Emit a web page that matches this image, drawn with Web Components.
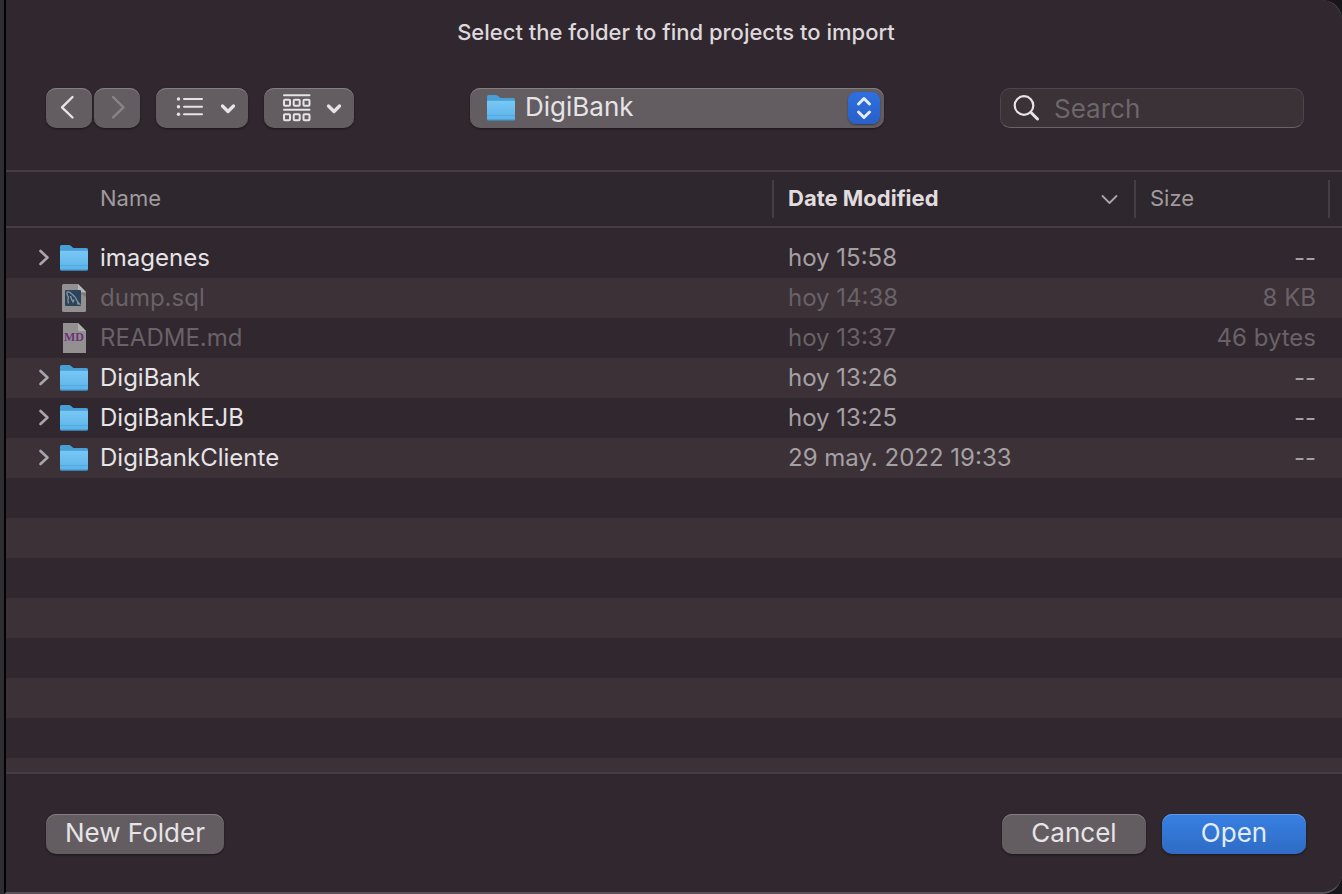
<!DOCTYPE html>
<html lang="en">
<head>
<meta charset="utf-8">
<title>Select the folder to find projects to import</title>
<style>
  html, body { margin: 0; height: 100%; }
  body { background: #2f2d31; font-family: Inter, "Liberation Sans", sans-serif; color: #e0dcdf; overflow: hidden; }
</style>
</head>
<body>
<open-panel>
  <span slot="title">Select the folder to find projects to import</span>
  <panel-toolbar slot="toolbar"></panel-toolbar>
  <file-list>
    <file-entry kind="folder" name="imagenes" date="hoy 15:58" size="--"></file-entry>
    <file-entry kind="sql" name="dump.sql" date="hoy 14:38" size="8 KB" disabled></file-entry>
    <file-entry kind="md" name="README.md" date="hoy 13:37" size="46 bytes" disabled></file-entry>
    <file-entry kind="folder" name="DigiBank" date="hoy 13:26" size="--"></file-entry>
    <file-entry kind="folder" name="DigiBankEJB" date="hoy 13:25" size="--"></file-entry>
    <file-entry kind="folder" name="DigiBankCliente" date="29 may. 2022 19:33" size="--"></file-entry>
  </file-list>
  <push-button slot="start">New Folder</push-button>
  <push-button slot="end">Cancel</push-button>
  <push-button slot="end" primary>Open</push-button>
</open-panel>

<script>
const base = (tag, html) => customElements.define(tag, class extends HTMLElement {
  constructor() {
    super();
    this.attachShadow({ mode: 'open' }).innerHTML = html;
  }
});

/* Dialog window: title, toolbar, contents, row of buttons */
base('open-panel', `
<style>
  :host { display: block; height: 100vh; box-sizing: border-box; padding-left: 4px; background: #2f2d31; }
  .under { height: 100%; background: #17161a; }
  section { height: 100%; box-sizing: border-box; display: flex; flex-direction: column; background: #31272e;
    border-left: 2px solid #000; border-bottom: 2px solid #575156; border-radius: 0 20px 20px 0;
    box-shadow: inset -1px 1px 0 -1px #575156; overflow: hidden; }
  h1 { margin: 0; padding: 16px 0 0 4px; font-size: 22px; line-height: 32px; font-weight: 500; text-align: center; color: #dcd8db; }
  .bar { padding: 40px 38px 42px 40px; }
  footer { display: flex; justify-content: space-between; padding: 40px 36px 38px 40px; }
  .end { display: flex; gap: 16px; }
</style>
<div class="under"><section role="dialog">
  <h1><slot name="title"></slot></h1>
  <div class="bar"><slot name="toolbar"></slot></div>
  <slot></slot>
  <footer><slot name="start"></slot><div class="end"><slot name="end"></slot></div></footer>
</section></div>`);

base('push-button', `
<style>
  :host { display: block; }
  button { display: block; height: 40px; min-width: 144px; padding: 0 19px 2px; border: 0; border-radius: 10px;
    background: #635d61; color: #e6e4e6; font: inherit; font-size: 26px; line-height: 38px;
    box-shadow: inset 0 1px 0 #837e82, 0 1px 2px #1d171b; }
  :host([primary]) button { background: linear-gradient(#3780e2, #2f6cc4); color: #e4ecf9; box-shadow: inset 0 1px 0 #5e9aea, 0 1px 2px #1d171b; }
</style>
<button type="button"><slot></slot></button>`);

/* Square toolbar button holding an icon */
base('tool-button', `
<style>
  :host { display: block; }
  button { display: flex; align-items: center; justify-content: center; width: var(--w, 46px); height: 40px; padding: 0; border: 0;
    border-radius: 10px; background: #635d61; color: #e6e4e6; box-shadow: inset 0 1px 0 #837e82, 0 1px 2px #1d171b; }
</style>
<button type="button"><slot></slot></button>`);

const icons = {
  folder: `<svg viewBox="0 0 30 30" width="30" height="30">
    <defs><linearGradient id="g" x1="0" y1="0" x2="0" y2="1"><stop offset="0" stop-color="#78c8f5"/><stop offset="1" stop-color="#5bb2e8"/></linearGradient></defs>
    <rect x="1.5" y="25" width="27" height="3" rx="1" fill="#1c161a" opacity=".5"/>
    <path d="M1 3.500Q1 2 2.500 2H10q1 0 1.800.700L13.800 4.400q.700.600 1.700.600H27.500Q29 5 29 6.500V15H1z" fill="#489fd6"/>
    <path d="M1 8.500Q1 7.500 2 7.500H28q1 0 1 1V26q0 1.500-1.500 1.500h-25Q1 27.500 1 26z" fill="url(#g)"/>
    <path d="M1 7.500H29M1 22.500H29" stroke="#4a9ed2" stroke-width=".800" opacity=".75"/>
    <path d="M1.500 27H28.500" stroke="#3c8fc6" stroke-width="1"/></svg>`,
  sql: `<svg viewBox="0 0 30 30" width="30" height="30">
    <path d="M3 2.500Q3 1 4.500 1H19l8 8V27.500q0 1.500-1.500 1.500h-21Q3 29 3 27.500z" fill="#929091"/>
    <path d="M19 1l8 8h-6.500Q19 9 19 7.500z" fill="#b8b6b7"/><path d="M20 10h7v4z" fill="#7d7b7c"/>
    <rect x="6" y="7" width="16" height="16" rx="1" fill="#2b4459"/>
    <path d="M9.500 20.500q-1.500-3.500 0-6.500-2.500-3-1-5 2-.500 4 1.700 4.500 3.300 5.500 7.300l2.500 3-2.500-.500M11.500 13q1 3.500 2.500 6l1-2.500" fill="none" stroke="#8695a2" stroke-width="1.300"/></svg>`,
  md: `<svg viewBox="0 0 30 30" width="30" height="30">
    <path d="M4 0H19l8 8V30H4z" fill="#929091"/><path d="M19 0l8 8h-6.500Q19 8 19 6.500z" fill="#b0aeaf"/>
    <text x="15" y="18" text-anchor="middle" font-family="Liberation Serif, serif" font-weight="700" font-size="12" fill="#6e3377">MD</text></svg>`
};

customElements.define('file-icon', class extends HTMLElement {
  constructor() { super(); this.attachShadow({ mode: 'open' }); }
  connectedCallback() {
    this.shadowRoot.innerHTML = `<style>:host { display: block; width: 30px; height: 30px; } svg { display: block; }</style>` + icons[this.getAttribute('kind')];
  }
});

/* Pop-up of the current path */
base('path-popup', `
<style>
  :host { display: grid; flex: 0 1 414px; height: 40px; }
  select, .over { grid-area: 1 / 1; }
  select { appearance: none; width: 100%; height: 40px; margin: 0; padding: 0 40px 4px 55px; border: 0; border-radius: 10px;
    background: #635d61; color: #e6e4e6; font: inherit; font-size: 26px; box-shadow: inset 0 1px 0 #837e82, 0 1px 2px #1d171b; }
  .over { display: flex; justify-content: space-between; align-items: center; padding: 0 4px 0 16px; pointer-events: none; z-index: 1; }
  .step { display: block; width: 32px; height: 32px; border-radius: 8px; background: linear-gradient(#2f6fe0, #2760c8); box-shadow: 0 1px 2px #3d383b; }
</style>
<select aria-label="Folder"><option>DigiBank</option></select>
<div class="over"><file-icon kind="folder"></file-icon>
  <svg class="step" viewBox="0 0 32 32" fill="none" stroke="#e4ecfb" stroke-width="3" stroke-linecap="round" stroke-linejoin="round"><path d="M10.500 12L16 6.500l5.500 5.500M10.500 20L16 25.500 21.500 20"/></svg>
</div>`);

base('search-field', `
<style>
  :host { display: flex; align-items: center; box-sizing: border-box; flex: 0 1 304px; min-width: 0; height: 40px; gap: 13px; padding: 0 12px;
    background: #3a3237; border: 1px solid #4d454a; border-bottom-color: #696266; border-radius: 10px; }
  svg { flex: none; display: block; }
  input { flex: 1; min-width: 0; height: 38px; margin: 0; padding: 0; border: 0; outline: 0; background: none; color: #e6e4e6; font: inherit; font-size: 26px; }
  input::placeholder { color: #6d666a; opacity: 1; }
</style>
<svg width="28" height="28" viewBox="0 0 28 28" fill="none" stroke="#e6e4e6" stroke-linecap="round"><circle cx="11" cy="11.500" r="9.300" stroke-width="2.200"/><path d="M18 18.500l6.500 6.500" stroke-width="3"/></svg>
<input type="text" placeholder="Search" aria-label="Search">`);

base('panel-toolbar', `
<style>
  :host { display: flex; justify-content: space-between; }
  .left, .nav { display: flex; }
  .left { gap: 16px; } .nav { gap: 2px; }
  svg { display: block; fill: none; stroke: currentColor; stroke-linecap: round; stroke-linejoin: round; }
  .view { --w: 92px; } .group { --w: 90px; }
  .dim { color: #8a8488; }
</style>
<div class="left">
  <div class="nav">
    <tool-button><svg width="46" height="40" viewBox="0 0 46 40" stroke-width="2.400" role="img" aria-label="Back"><path d="M26.500 9L16 19.300 26.500 29.500"/></svg></tool-button>
    <tool-button><svg class="dim" width="46" height="40" viewBox="0 0 46 40" stroke-width="2.400" role="img" aria-label="Forward"><path d="M19 9l10.500 10.300L19 29.500"/></svg></tool-button>
  </div>
  <tool-button class="view"><svg width="92" height="40" viewBox="0 0 92 40" stroke-width="2" role="img" aria-label="View as list">
    <path d="M28 11H46M28 18.700H46M28 26.300H46"/><g fill="currentColor" stroke="none"><circle cx="22.500" cy="11" r="1.700"/><circle cx="22.500" cy="18.700" r="1.700"/><circle cx="22.500" cy="26.300" r="1.700"/></g>
    <path d="M66.500 18L72 23.500 77.500 18" stroke-width="3.300"/></svg></tool-button>
  <tool-button class="group"><svg width="90" height="40" viewBox="0 0 90 40" stroke-width="2" role="img" aria-label="Group">
    <path d="M20 7.300H45.500M20 21.700H45.500"/>
    <rect x="20" y="11.700" width="6" height="6" rx="1"/><rect x="29.700" y="11.700" width="6" height="6" rx="1"/><rect x="39.500" y="11.700" width="6" height="6" rx="1"/>
    <rect x="20" y="26.300" width="6" height="6" rx="1"/><rect x="29.700" y="26.300" width="6" height="6" rx="1"/><rect x="39.500" y="26.300" width="6" height="6" rx="1"/>
    <path d="M64.500 18L70 23.500 75.500 18" stroke-width="3.300"/></svg></tool-button>
</div>
<path-popup></path-popup>
<search-field></search-field>`);

/* Reads its file-entry children and lays them out as a table */
customElements.define('file-list', class extends HTMLElement {
  constructor() { super(); this.attachShadow({ mode: 'open' }); }
  connectedCallback() {
    const arrow = `<svg class="arrow" width="12" height="20" viewBox="0 0 12 20" fill="none" stroke="#aaa5a8" stroke-width="2.600" stroke-linecap="round" stroke-linejoin="round"><path d="M2.500 3L9.500 9.500 2.500 16"/></svg>`;
    const rows = [...this.querySelectorAll('file-entry')].map(e => {
      const a = n => e.getAttribute(n);
      return `<tr class="${e.hasAttribute('disabled') ? 'off' : ''}"><td class="name"><div>${a('kind') === 'folder' ? arrow : '<i></i>'}<file-icon kind="${a('kind')}"></file-icon><span>${a('name')}</span></div></td><td>${a('date')}</td><td class="size">${a('size')}</td></tr>`;
    }).join('');
    this.shadowRoot.innerHTML = `
<style>
  :host { display: flex; flex-direction: column; flex: 1; min-height: 0; overflow: hidden; border: solid #453d43; border-width: 2px 0; }
  table { flex: none; width: 100%; table-layout: fixed; border-collapse: separate; border-spacing: 0; }
  .c-date { width: 362px; } .c-size { width: 208px; }
  th { height: 54px; padding: 0; background: #2e272d; border-bottom: 2px solid #453d43; text-align: left; font-size: 22px; line-height: 36px; font-weight: 400; color: #a09b9e; }
  th div { display: flex; justify-content: space-between; align-items: center; box-sizing: border-box; height: 38px; padding: 0 0 2px 14px; border-left: 2px solid #453d43; }
  th.first div { padding-left: 94px; border-left: 0; }
  th.sorted div { color: #e0dcdf; font-weight: 700; padding-right: 16px; }
  th.last div { margin-right: 12px; border-right: 2px solid #453d43; }
  th svg { padding-top: 2px; }
  tbody::before { content: ""; display: block; height: 10px; }
  td { height: 40px; padding: 0 0 0 16px; font-size: 24px; line-height: 40px; color: #a5a0a3; white-space: nowrap; }
  tbody tr:nth-child(even) { background: #3b3137; }
  td.name { padding: 0 0 0 32px; color: #e6e4e6; }
  td.name div { display: flex; align-items: center; height: 40px; }
  td.name span { padding-left: 11px; }
  .arrow, i { flex: none; width: 12px; margin-right: 9px; }
  file-icon { flex: none; }
  td.size { text-align: right; padding-right: 26px; }
  tr.off td { color: #696267; }
  .rest { flex: 1; background: repeating-linear-gradient(#31272e 0 40px, #3b3137 40px 80px); }
</style>
<table>
  <colgroup><col><col class="c-date"><col class="c-size"></colgroup>
  <thead><tr><th class="first"><div>Name</div></th>
    <th class="sorted" aria-sort="descending"><div>Date Modified<svg width="18" height="12" viewBox="0 0 18 12" fill="none" stroke="#aaa5a8" stroke-width="1.800" stroke-linecap="round" stroke-linejoin="round"><path d="M2.500 3l7 7 7-7"/></svg></div></th>
    <th class="last"><div>Size</div></th></tr></thead>
  <tbody>${rows}</tbody>
</table>
<div class="rest"></div>`;
  }
});
</script>
</body>
</html>
